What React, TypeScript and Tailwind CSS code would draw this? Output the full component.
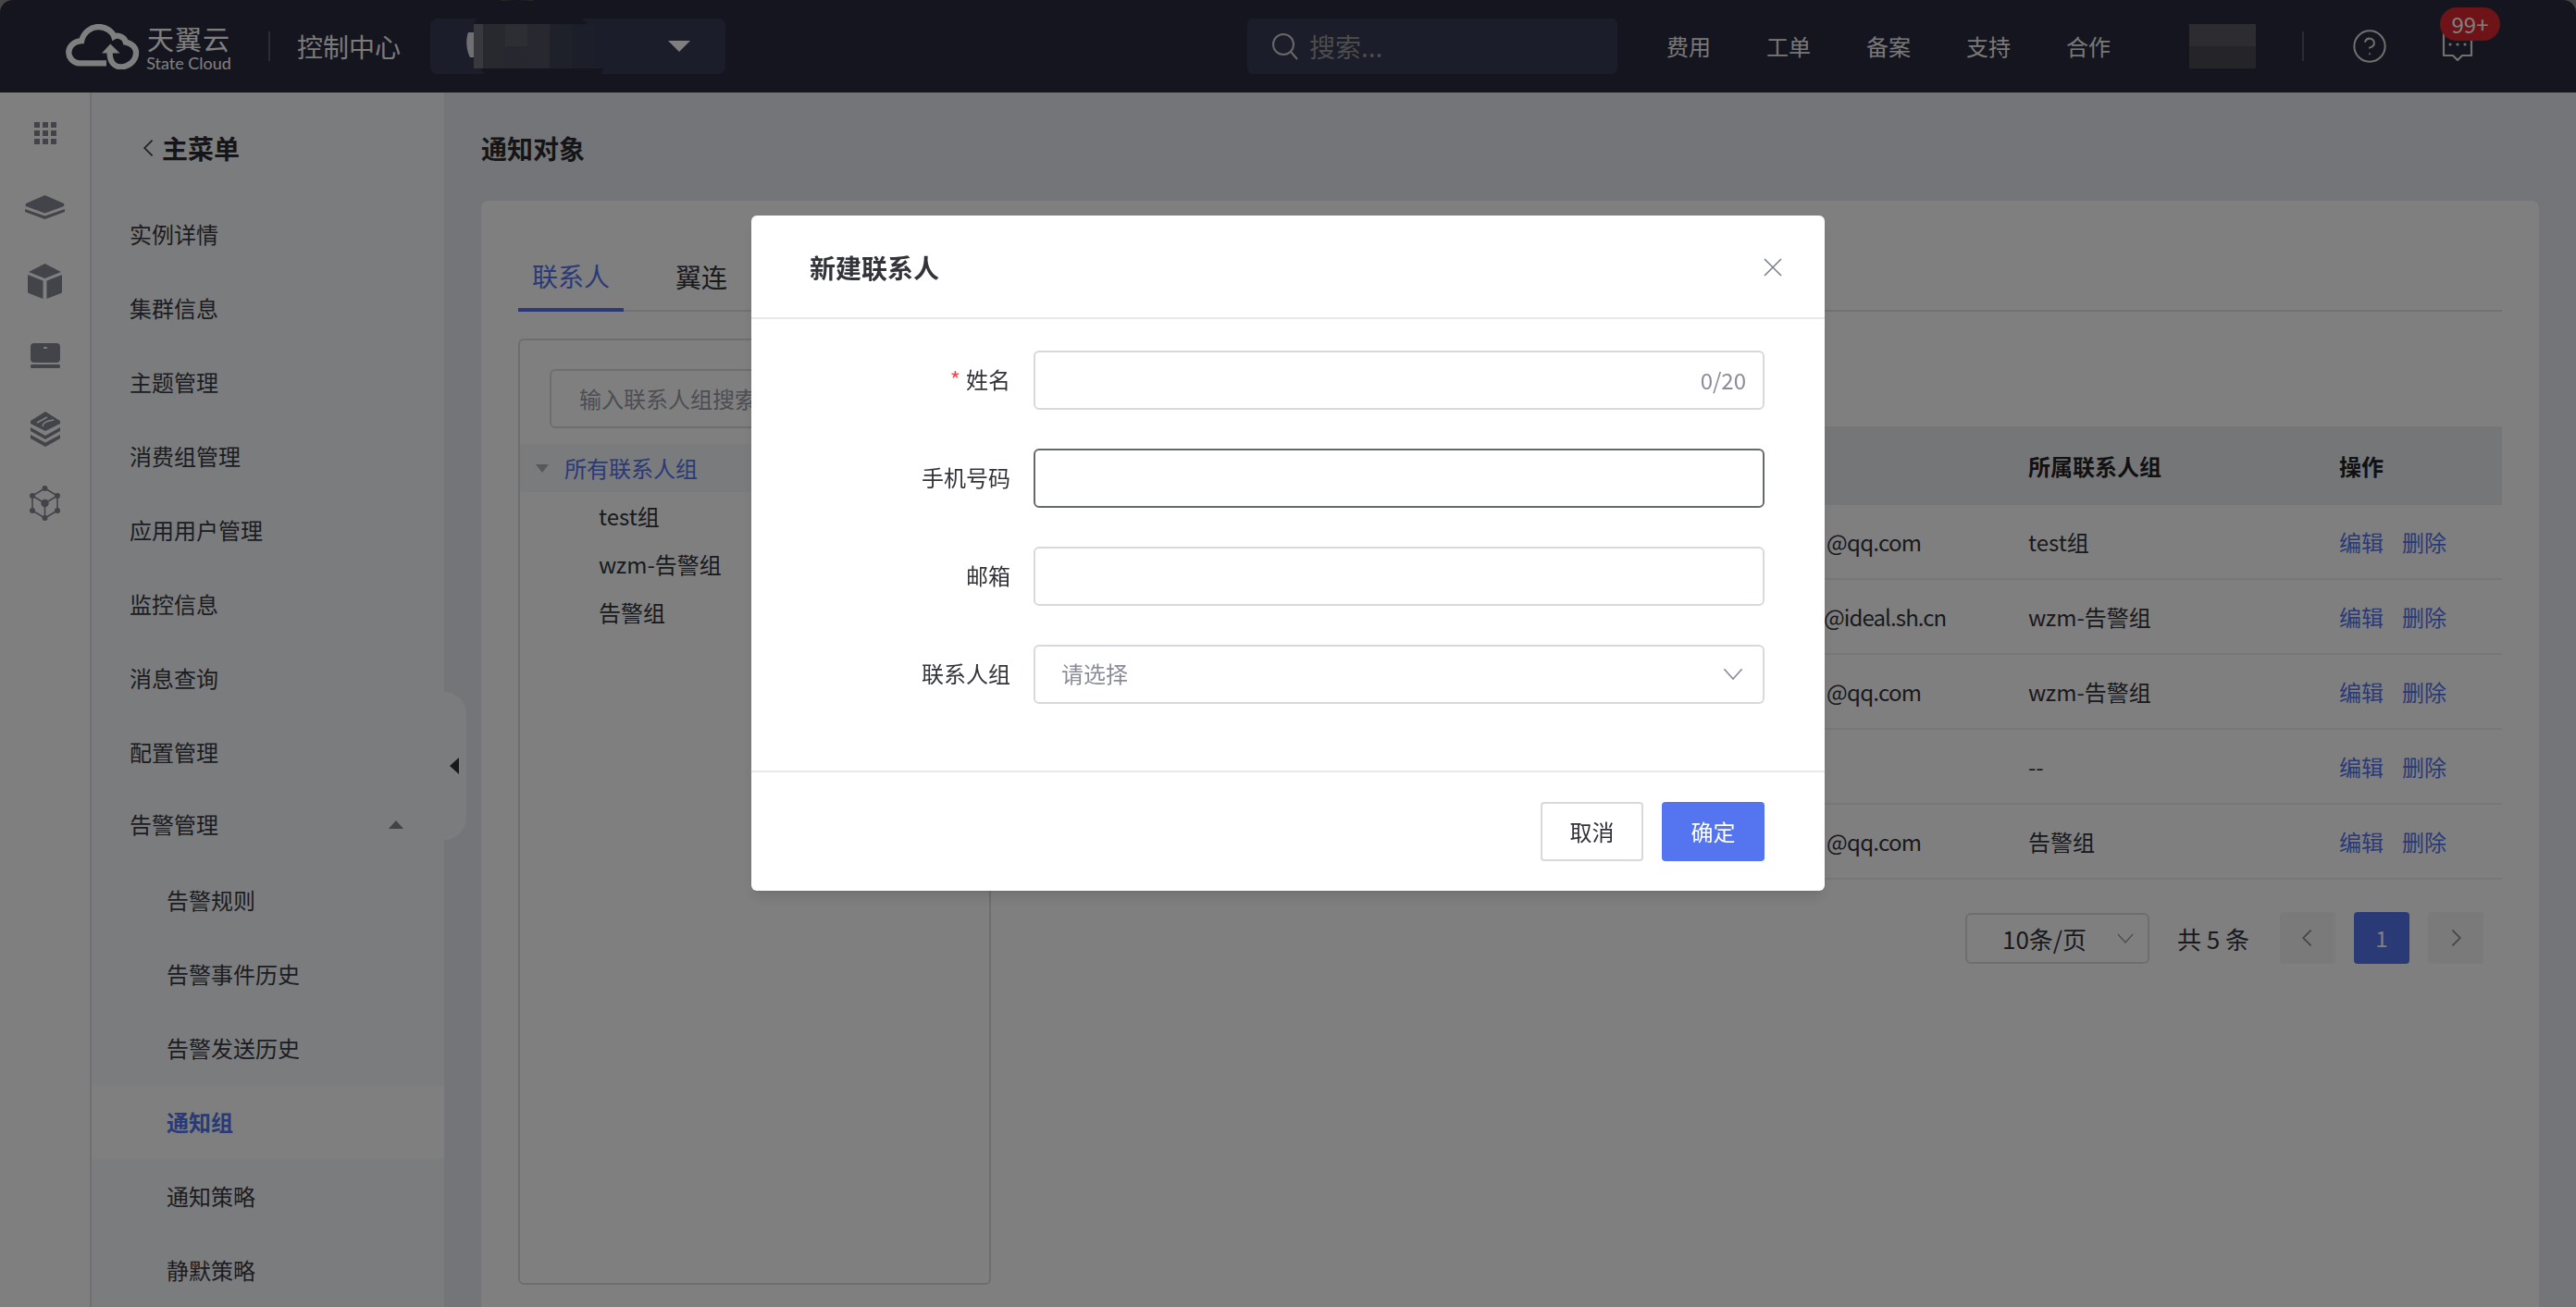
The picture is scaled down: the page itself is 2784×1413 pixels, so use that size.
import { CircleHelp } from "lucide-react";

const menuItems = ["实例详情", "集群信息", "主题管理", "消费组管理", "应用用户管理", "监控信息", "消息查询", "配置管理"];
const subItems = ["告警规则", "告警事件历史", "告警发送历史", "通知组", "通知策略", "静默策略"];
const navItems = ["费用", "工单", "备案", "支持", "合作"];
const treeItems = ["test组", "wzm-告警组", "告警组"];
const rows = [
  { email: "@qq.com", group: "test组", shift: false },
  { email: "@ideal.sh.cn", group: "wzm-告警组", shift: true },
  { email: "@qq.com", group: "wzm-告警组", shift: false },
  { email: "", group: "--", shift: false },
  { email: "@qq.com", group: "告警组", shift: false },
];

function CloudLogo() {
  return (
    <svg width="80" height="49" viewBox="33 25 240 148" fill="none" stroke="#ffffff" strokeWidth="19">
      <path d="M165 153 H78 C52 153 42 130 42 118 C42 98 58 82 84 80 C90 52 115 34 140 34 C165 34 185 50 190 66 C205 58 225 70 228 84 C250 88 262 104 262 118 C262 145 238 165 212 165 C192 165 176 150 176 118" />
      <path d="M150 120 L178 90 L209 120 Z" fill="#ffffff" stroke="none" />
    </svg>
  );
}

function GridIcon() {
  return (
    <svg width="24" height="24" viewBox="0 0 24 24" fill="#868894">
      <rect x="0" y="0" width="6" height="6" />
      <rect x="9" y="0" width="6" height="6" />
      <rect x="18" y="0" width="6" height="6" />
      <rect x="0" y="9" width="6" height="6" />
      <rect x="9" y="9" width="6" height="6" />
      <rect x="18" y="9" width="6" height="6" />
      <rect x="0" y="18" width="6" height="6" />
      <rect x="9" y="18" width="6" height="6" />
      <rect x="18" y="18" width="6" height="6" />
    </svg>
  );
}

function LayersIcon() {
  return (
    <svg width="43" height="26" viewBox="0 0 43 26" fill="#868894">
      <path d="M21.5 0 L42 9 Q43 11 42 12 L21.5 19.5 L1 12 Q0 11 1 9 Z" />
      <path d="M0 15 L21.5 22.5 L43 15 V18 L21.5 26 L0 18 Z" />
    </svg>
  );
}

function CubeIcon() {
  return (
    <svg width="37" height="38" viewBox="0 0 37 38" fill="#868894">
      <path d="M18.5 0 L36 9 L18.5 16 L1 9 Z" />
      <path d="M0 12 L16.5 18.5 V38 L1 32 L0 31 Z" />
      <path d="M37 12 L20.5 18.5 V38 L36 32 L37 31 Z" />
    </svg>
  );
}

function LaptopIcon() {
  return (
    <svg width="32" height="27" viewBox="0 0 32 27" fill="#868894">
      <rect x="0" y="0" width="32" height="21" rx="4" />
      <rect x="14" y="4" width="4" height="2" rx="1" fill="#ffffff" />
      <rect x="0" y="23" width="32" height="4" rx="1.5" />
    </svg>
  );
}

function BooksIcon() {
  return (
    <svg width="32" height="38" viewBox="0 0 32 38" fill="#868894">
      <path d="M16 0 L32 10 V13 L16 21 L0 13 V10 Z" />
      <path d="M0 17 L16 26 L32 17 V21 L16 30 L0 21 Z" />
      <path d="M0 25 L16 33.5 L32 25 V29 L16 38 L0 29 Z" />
      <path d="M7 12 L18 6 M13 16 C13 12 17 10 25 9" fill="none" stroke="#ffffff" strokeWidth="1.6" />
    </svg>
  );
}

function HubIcon() {
  return (
    <svg width="33" height="38" viewBox="0 0 33 38" fill="#868894" stroke="#868894" strokeWidth="1.6">
      <path d="M16.5 3 L30 11 V27 L16.5 35 L3 27 V11 Z M3 11 L16.5 19 L30 11 M16.5 19 V35" fill="none" />
      <circle cx="16.5" cy="3" r="2.2" />
      <circle cx="3" cy="11" r="2.2" />
      <circle cx="30" cy="11" r="2.2" />
      <circle cx="3" cy="27" r="2.2" />
      <circle cx="30" cy="27" r="2.2" />
      <circle cx="16.5" cy="35" r="2.2" />
      <circle cx="16.5" cy="19" r="3.4" />
    </svg>
  );
}

function Chevron({ dir, color, size = 20 }: { dir: "left" | "right" | "down"; color: string; size?: number }) {
  const points = dir === "left" ? "13,3 6,10 13,17" : dir === "right" ? "7,3 14,10 7,17" : "2,6 10,15 18,6";
  return (
    <svg width={size} height={size} viewBox="0 0 20 20" fill="none" stroke={color} strokeWidth="1.4">
      <polyline points={points} />
    </svg>
  );
}

// the mosaic patch that hides the account name in the dropdown
function Redaction() {
  return (
    <svg className="absolute left-[39px] top-[-22px]" width="160" height="100" viewBox="0 0 160 100">
      <path d="M2 37 C-1 45 0 57 4 64 L9 64 V37 Z" fill="#ffffff" opacity="0.85" />
      <path d="M32 4 Q55 -3 78 4 Z" fill="#7a6f62" />
      <path d="M8 30 C10 20 20 10 34 3 Q55 1 75 3 C95 8 115 15 131 27 L148 76 Q145 90 135 100 H41 Q25 90 15 76 Z" fill="#282a3c" />
      <rect x="130" y="28" width="22" height="48" fill="#363a54" />
      <rect x="8" y="28" width="10" height="48" fill="#70727c" />
      <rect x="18" y="28" width="24" height="48" fill="#50525f" />
      <rect x="42" y="28" width="24" height="24" fill="#5a5c68" />
      <rect x="42" y="52" width="24" height="24" fill="#4e505e" />
      <rect x="66" y="28" width="24" height="48" fill="#4e5060" />
      <rect x="90" y="28" width="24" height="48" fill="#3f4254" />
      <rect x="114" y="28" width="24" height="48" fill="#383c52" />
    </svg>
  );
}

function Header() {
  return (
    <div className="h-[100px] shrink-0 rounded-t-[14px] bg-[#282a3c] flex items-center text-white">
      <div className="ml-[71px]">
        <CloudLogo />
      </div>
      <div className="ml-[9px] w-[88px] mt-[5px] flex flex-col items-center font-['Roboto','Noto_Sans_CJK_SC',sans-serif]">
        <div className="text-[29px] leading-[30px] tracking-[1px] whitespace-nowrap">天翼云</div>
        <div className="text-[18px] leading-[18px] whitespace-nowrap font-['Lato',sans-serif]">State Cloud</div>
      </div>
      <div className="ml-[42px] w-[2px] h-[32px] bg-[#55576a]" />
      <div className="ml-[29px] text-[28px] leading-none whitespace-nowrap text-[#f4f4f4]">控制中心</div>
      <div className="relative ml-[32px] w-[319px] h-[60px] rounded-[8px] bg-[#363a54] flex items-center justify-end pr-[38px]">
        <Redaction />
        <div className="w-0 h-0 border-x-[12px] border-x-transparent border-t-[12px] border-t-white" />
      </div>

      <div className="ml-[564px] w-[400px] h-[60px] rounded-[6px] bg-[#363a54] flex items-center pl-[25px]">
        <svg width="32" height="32" viewBox="0 0 32 32" fill="none" stroke="#d0d0d0" strokeWidth="2">
          <circle cx="14" cy="14" r="11" />
          <path d="M22 22 L29 30" />
        </svg>
        <span className="ml-[10px] text-[28px] leading-none text-[#999999]">搜索...</span>
      </div>
      <div className="ml-[53px] flex gap-[60px] text-[24px] leading-none text-[#f0f0f0]">
        {navItems.map((item) => (
          <span key={item} className="whitespace-nowrap">{item}</span>
        ))}
      </div>
      <div className="ml-[85px] w-[72px] h-[48px] flex flex-col">
        <div className="h-[24px] bg-[#5a5b62]" />
        <div className="h-[24px] bg-[#4a4b52]" />
      </div>
      <div className="ml-[50px] w-[2px] h-[32px] bg-[#55576a]" />
      <div className="ml-[51px]">
        <CircleHelp size={40} strokeWidth={1.2} color="#e0e0e0" />
      </div>
      <div className="relative ml-[58px] w-[34px] h-[34px]">
        <svg className="mt-[1px]" width="34" height="33" viewBox="0 0 34 33" fill="none" stroke="#e0e0e0" strokeWidth="2.2">
          <path d="M2 1 V26 H12 L17 31 L22 26 H32 V1 Z" strokeLinejoin="round" />
          <circle cx="9" cy="14" r="1.6" fill="#e0e0e0" stroke="none" />
          <circle cx="17" cy="14" r="1.6" fill="#e0e0e0" stroke="none" />
          <circle cx="25" cy="14" r="1.6" fill="#e0e0e0" stroke="none" />
        </svg>
        <div className="absolute left-[-2px] top-[-25px] w-[65px] h-[36px] rounded-full bg-[#dc2630] flex items-center justify-center text-[24px] leading-none">
          99+
        </div>
      </div>
    </div>
  );
}

function Rail() {
  return (
    <div className="w-[99px] shrink-0 bg-white border-r-2 border-[#dfe0e6] pt-[4px] flex flex-col">
      <div className="h-[80px] flex items-center justify-center"><GridIcon /></div>
      <div className="h-[80px] flex items-center justify-center"><LayersIcon /></div>
      <div className="h-[80px] flex items-center justify-center"><CubeIcon /></div>
      <div className="h-[80px] flex items-center justify-center"><LaptopIcon /></div>
      <div className="h-[80px] flex items-center justify-center"><BooksIcon /></div>
      <div className="h-[80px] flex items-center justify-center"><HubIcon /></div>
    </div>
  );
}

function Sidebar() {
  return (
    <div className="relative w-[381px] shrink-0 bg-[#f7f8fc] text-[24px] text-[#3a3b42]">
      <div className="mt-[40px] mb-[33px] h-[40px] pl-[50px] flex items-center">
        <Chevron dir="left" color="#3a3b42" size={24} />
        <span className="ml-[2px] text-[28px] font-bold text-[#2a2b30] leading-none">主菜单</span>
      </div>
      {menuItems.map((item) => (
        <div key={item} className="h-[80px] pl-[41px] flex items-center">{item}</div>
      ))}
      <div className="h-[76px] mb-[4px] pl-[41px] pr-[44px] flex items-center justify-between">
        <span>告警管理</span>
        <div className="w-0 h-0 border-x-[8px] border-x-transparent border-b-[9px] border-b-[#85868c]" />
      </div>
      {subItems.map((item) => (
        <div
          key={item}
          className={
            item === "通知组"
              ? "h-[80px] pl-[81px] flex items-center bg-[#ffffff] font-bold text-[#5574ef]"
              : "h-[80px] pl-[81px] flex items-center"
          }
        >
          {item}
        </div>
      ))}
      <div className="absolute left-full top-[648px] w-[24px] h-[160px] rounded-r-[24px] bg-[#f7f8fc] flex items-center pl-[6px]">
        <div className="w-0 h-0 border-y-[9px] border-y-transparent border-r-[10px] border-r-[#333333]" />
      </div>
    </div>
  );
}

function ContactTree() {
  return (
    <div className="w-[511px] shrink-0 h-[1023px] rounded-[6px] border-2 border-[#dcdcdc] pt-[31px]">
      <div className="mx-[32px] h-[64px] rounded-[6px] border-2 border-[#dcdde2] flex items-center pl-[30px] text-[24px] text-[#9a9ca6] whitespace-nowrap overflow-hidden">
        输入联系人组搜索
      </div>
      <div className="mt-[17px] h-[52px] bg-[#f4f6fa] flex items-center pl-[17px] text-[24px] text-[#5574ef]">
        <div className="w-0 h-0 border-x-[7px] border-x-transparent border-t-[9px] border-t-[#aeb0b8]" />
        <span className="ml-[17px]">所有联系人组</span>
      </div>
      {treeItems.map((item) => (
        <div key={item} className="h-[52px] pl-[85px] flex items-center text-[24px] text-[#33343a]">{item}</div>
      ))}
    </div>
  );
}

function ContactTable() {
  return (
    <div className="ml-[39px] flex-1 mt-[95px] text-[24px] text-[#33343a]">
      <div className="h-[85px] bg-[#ebedf1] grid grid-cols-[1082px_336px_176px] items-center font-bold text-[#222328]">
        <div />
        <div>所属联系人组</div>
        <div>操作</div>
      </div>
      {rows.map((row, i) => (
        <div key={i} className="h-[81px] border-b-2 border-[#eeeef1] grid grid-cols-[864px_218px_336px_176px] items-center">
          <div />
          <div className={row.shift ? "ml-[-3px] whitespace-nowrap tracking-[-0.9px]" : "whitespace-nowrap tracking-[-0.7px]"}>{row.email}</div>
          <div>{row.group}</div>
          <div className="flex gap-[20px] text-[#5574ef]">
            <span>编辑</span>
            <span>删除</span>
          </div>
        </div>
      ))}
      <div className="mt-[35px] pr-[20px] flex items-center justify-end">
        <div className="w-[199px] h-[55px] rounded-[6px] border-2 border-[#dcdde2] flex items-center justify-between pl-[38px] pr-[14px] text-[26px]">
          <span>10条/页</span>
          <Chevron dir="down" color="#9a9ca6" />
        </div>
        <div className="ml-[30px] w-[81px] text-[26px] whitespace-nowrap">共 5 条</div>
        <div className="ml-[30px] w-[60px] h-[56px] rounded-[4px] bg-[#f4f4f5] flex items-center justify-center">
          <Chevron dir="left" color="#85868c" size={24} />
        </div>
        <div className="ml-[20px] w-[60px] h-[56px] rounded-[4px] bg-[#5574ef] text-white flex items-center justify-center">1</div>
        <div className="ml-[20px] w-[60px] h-[56px] rounded-[4px] bg-[#f4f4f5] flex items-center justify-center">
          <Chevron dir="right" color="#85868c" size={24} />
        </div>
      </div>
    </div>
  );
}

function Main() {
  return (
    <div className="flex-1 min-w-0 bg-[#e9ebf0] px-[40px] flex flex-col">
      <div className="mt-[40px] h-[40px] flex items-center text-[28px] font-bold text-[#2a2b30]">通知对象</div>
      <div className="mt-[37px] flex-1 rounded-t-[8px] bg-white px-[40px] pt-[50px]">
        <div className="h-[70px] border-b-2 border-[#e4e5ea] flex text-[28px] leading-none">
          <div className="w-[114px] h-[70px] pb-[5px] border-b-4 border-[#5574ef] flex items-center justify-center text-[#5574ef]">联系人</div>
          <div className="ml-[40px] pl-[16px] h-[64px] flex items-center text-[#33343a]">翼连</div>
        </div>
        <div className="mt-[29px] flex">
          <ContactTree />
          <ContactTable />
        </div>
      </div>
    </div>
  );
}

function FormRow({ label, required, children }: { label: string; required?: boolean; children: React.ReactNode }) {
  return (
    <div className="mb-[42px] flex items-center">
      <div className="w-[280px] pb-[2px] text-right text-[24px] text-[#33343a]">
        {required && <span className="mr-[6px] text-[#f0494f]">*</span>}
        {label}
      </div>
      <div className="ml-[25px] w-[790px]">{children}</div>
    </div>
  );
}

function Dialog() {
  return (
    <div className="fixed inset-0 bg-black/50 flex justify-center pt-[233px]">
      <div className="w-[1160px] h-[730px] rounded-[6px] bg-white shadow-lg">
        <div className="h-[112px] pt-[2px] border-b-2 border-[#e8e8ee] pl-[63px] pr-[46px] flex items-center justify-between">
          <span className="text-[28px] font-bold text-[#33343a]">新建联系人</span>
          <svg width="20" height="20" viewBox="0 0 20 20" stroke="#7d808c" strokeWidth="1.6">
            <path d="M1 1 L19 19 M19 1 L1 19" />
          </svg>
        </div>
        <div className="h-[488px] pt-[34px]">
          <FormRow label="姓名" required>
            <div className="h-[64px] rounded-[6px] border-2 border-[#d8d9de] flex items-center justify-end pr-[18px] text-[24px] text-[#8a8d99]">0/20</div>
          </FormRow>
          <FormRow label="手机号码">
            <input className="block w-full h-[64px] rounded-[6px] border-2 border-[#666a70] outline-none" readOnly />
          </FormRow>
          <FormRow label="邮箱">
            <input className="block w-full h-[64px] rounded-[6px] border-2 border-[#d8d9de] outline-none" readOnly />
          </FormRow>
          <FormRow label="联系人组">
            <div className="h-[64px] rounded-[6px] border-2 border-[#d8d9de] flex items-center justify-between pl-[28px] pr-[20px] pb-[2px] text-[24px] text-[#8a8d99]">
              <span>请选择</span>
              <Chevron dir="down" color="#8a8d99" size={24} />
            </div>
          </FormRow>
        </div>
        <div className="h-[130px] border-t-2 border-[#e8e8ee] pt-[32px] pr-[65px] flex justify-end gap-[20px] text-[24px]">
          <button className="w-[111px] h-[64px] rounded-[4px] border-2 border-[#d8d9de] text-[#33343a]">取消</button>
          <button className="w-[111px] h-[64px] rounded-[4px] bg-[#5574ef] text-white">确定</button>
        </div>
      </div>
    </div>
  );
}

export default function App() {
  return (
    <div className="h-screen overflow-hidden bg-[#8c8c8c] flex flex-col font-['Noto_Sans_CJK_SC','Noto_Sans',sans-serif]">
      <Header />
      <div className="flex-1 min-h-0 flex">
        <Rail />
        <Sidebar />
        <Main />
      </div>
      <Dialog />
    </div>
  );
}
